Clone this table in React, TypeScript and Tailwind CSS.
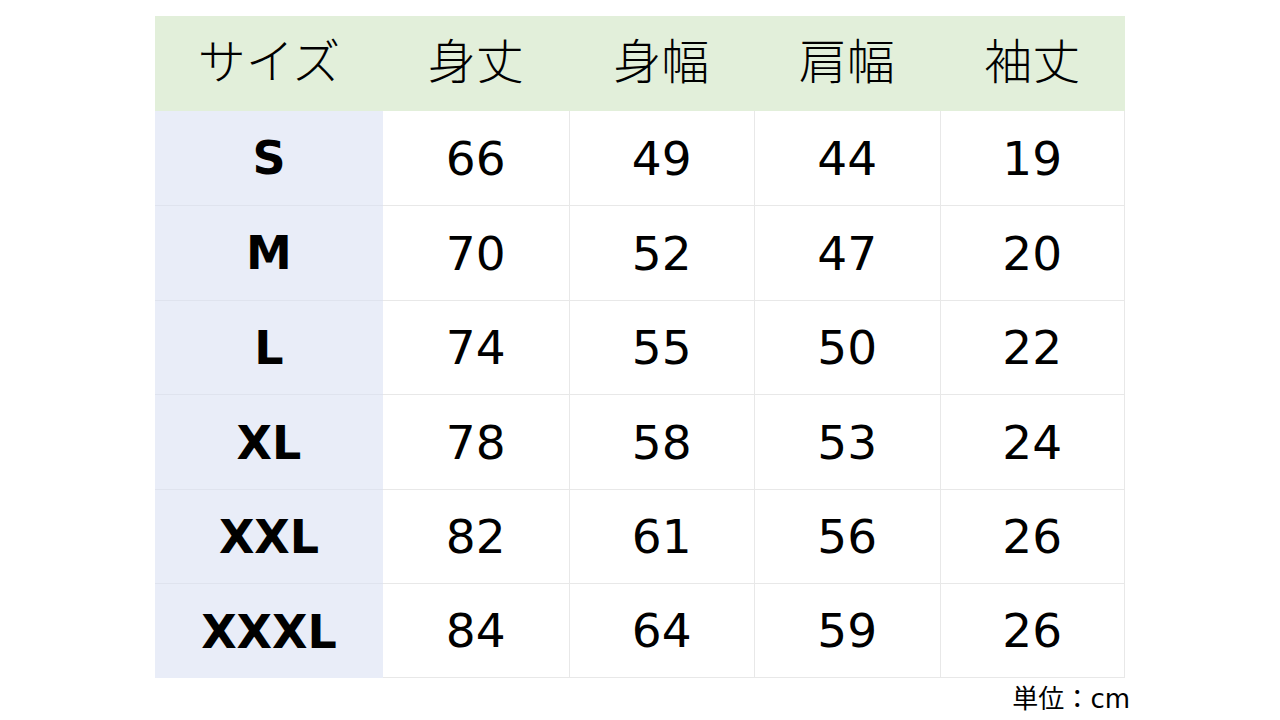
const headers = ['サイズ', '身丈', '身幅', '肩幅', '袖丈'];

const rows: [string, number, number, number, number][] = [
  ['S', 66, 49, 44, 19],
  ['M', 70, 52, 47, 20],
  ['L', 74, 55, 50, 22],
  ['XL', 78, 58, 53, 24],
  ['XXL', 82, 61, 56, 26],
  ['XXXL', 84, 64, 59, 26],
];

const App = () => {
  return (
    <div className="h-[720px] w-[1280px] overflow-hidden bg-white pl-[155px] pt-[16px] font-['DejaVu_Sans','Noto_Sans_CJK_JP',sans-serif] text-black">
      <div className="grid w-[970px] grid-cols-[228px_repeat(4,1fr)] auto-rows-[94.57px]">
        {headers.map((h) => (
          <div key={h} className="flex items-center justify-center bg-[#e2efda] pb-[10px] font-['Noto_Sans_CJK_JP',sans-serif] text-[48px] font-light leading-none">
            {h}
          </div>
        ))}
        {rows.map(([size, ...vals], i) => (
          <div key={size} className="contents">
            <div className={`flex items-center justify-center bg-[#e9edf8] pt-[2px] text-[46px] font-bold ${i > 0 ? 'border-t border-[#dfe3ee]' : ''}`}>
              {size}
            </div>
            {vals.map((v, j) => (
              <div
                key={j}
                className={`flex items-center justify-center border-[#e8e8e8] pt-[2px] text-[47px] ${i > 0 ? 'border-t' : ''} ${j > 0 ? 'border-l' : ''} ${j === 3 ? 'border-r' : ''} ${i === rows.length - 1 ? 'border-b' : ''}`}
              >
                {v}
              </div>
            ))}
          </div>
        ))}
      </div>
      <div className="w-[975px] pt-[2px] text-right font-['Noto_Sans_CJK_JP',sans-serif] text-[26px] leading-[34px]">
        単位：<span className="font-['DejaVu_Sans',sans-serif]">cm</span>
      </div>
    </div>
  );
};

export default App;
